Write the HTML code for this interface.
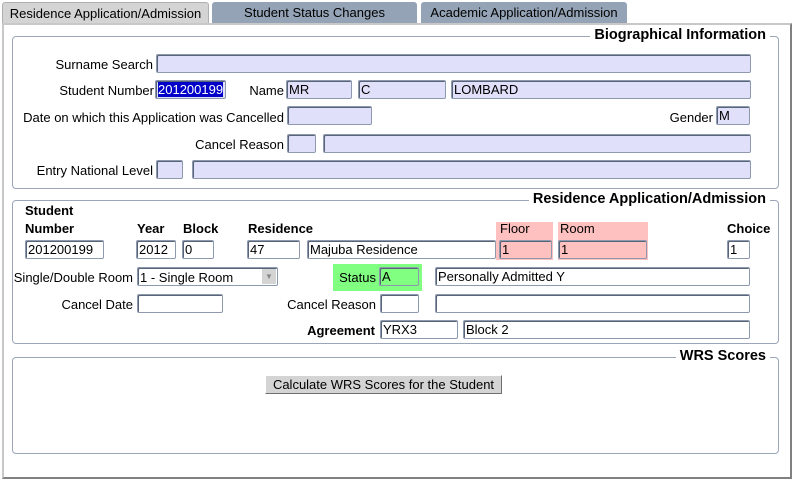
<!DOCTYPE html>
<html><head><style>
*{margin:0;padding:0;box-sizing:border-box}
body{width:795px;height:482px;background:#fff;position:relative;overflow:hidden;font-family:"Liberation Sans",sans-serif;font-size:13px;color:#000}
.a{position:absolute;white-space:nowrap}
.tab{position:absolute;top:2px;height:21px;border-radius:3px 3px 0 0;text-align:center;line-height:22px;font-size:13px}
.panel{position:absolute;left:2px;top:23px;width:790px;height:456px;border-left:2px solid #c8c8c8;border-top:2px solid #c8c8c8;border-right:2px solid #808080;border-bottom:2px solid #808080}
.grp{position:absolute;border:1px solid #9aa6b8;border-radius:4px}
.gt{position:absolute;background:#fff;font-weight:bold;font-size:14.5px;padding:0 4px;line-height:15px}
.i{position:absolute;height:19px;border:1px solid #8d99ad;border-radius:2px;box-shadow:inset 1px 1px 0 #5a6478;background:#fff;padding-left:2px;line-height:17px;font-size:13px;overflow:hidden}
.l{background:#e0e0fa}
.lb{position:absolute;white-space:nowrap;line-height:15px}
.b{font-weight:bold}
</style></head><body>
<div class="tab" style="left:2px;width:207px;background:#d4d4d4;border:1px solid #b0b0b0;border-bottom:none">Residence Application/Admission</div>
<div class="tab" style="left:212px;width:205px;background:#94a3b5">Student Status Changes</div>
<div class="tab" style="left:421px;width:206px;background:#94a3b5">Academic Application/Admission</div>
<div class="panel"></div>

<div class="grp" style="left:12px;top:36px;width:767px;height:153px"></div>
<div class="gt" style="right:25px;top:28px">Biographical Information</div>
<div class="lb" style="right:642px;top:57px">Surname Search</div>
<div class="i l" style="left:156px;top:54px;width:595px"></div>
<div class="lb" style="right:641px;top:83px">Student Number</div>
<div class="i l" style="left:155px;top:80px;width:71px"><span style="background:#0000c8;color:#fff">201200199</span></div>
<div class="lb" style="right:511px;top:83px">Name</div>
<div class="i l" style="left:286px;top:80px;width:66px">MR</div>
<div class="i l" style="left:358px;top:80px;width:88px">C</div>
<div class="i l" style="left:451px;top:80px;width:300px">LOMBARD</div>
<div class="lb" style="right:511px;top:110px">Date on which this Application was Cancelled</div>
<div class="i l" style="left:287px;top:106px;width:85px"></div>
<div class="lb" style="right:82px;top:110px">Gender</div>
<div class="i l" style="left:716px;top:106px;width:34px">M</div>
<div class="lb" style="right:511px;top:137px">Cancel Reason</div>
<div class="i l" style="left:287px;top:134px;width:29px"></div>
<div class="i l" style="left:323px;top:134px;width:428px"></div>
<div class="lb" style="right:642px;top:163px">Entry National Level</div>
<div class="i l" style="left:156px;top:160px;width:27px"></div>
<div class="i l" style="left:192px;top:160px;width:559px"></div>

<div class="grp" style="left:12px;top:200px;width:767px;height:144px"></div>
<div class="gt" style="right:25px;top:192px">Residence Application/Admission</div>
<div class="lb b" style="left:25px;top:203px">Student</div>
<div class="lb b" style="left:25px;top:221px">Number</div>
<div class="lb b" style="left:137px;top:221px">Year</div>
<div class="lb b" style="left:183px;top:221px">Block</div>
<div class="lb b" style="left:248px;top:221px">Residence</div>
<div class="a" style="left:496px;top:222px;width:57px;height:38px;background:#ffc0c0"></div>
<div class="a" style="left:558px;top:222px;width:90px;height:38px;background:#ffc0c0"></div>
<div class="lb" style="left:500px;top:221px">Floor</div>
<div class="lb" style="left:560px;top:221px">Room</div>
<div class="lb b" style="left:727px;top:221px">Choice</div>
<div class="i" style="left:25px;top:240px;width:79px">201200199</div>
<div class="i" style="left:136px;top:240px;width:40px">2012</div>
<div class="i" style="left:182px;top:240px;width:32px">0</div>
<div class="i" style="left:247px;top:240px;width:53px">47</div>
<div class="i" style="left:307px;top:240px;width:189px">Majuba Residence</div>
<div class="i" style="left:499px;top:240px;width:53px;background:#ffc0c0">1</div>
<div class="i" style="left:558px;top:240px;width:89px;background:#ffc0c0">1</div>
<div class="i" style="left:727px;top:240px;width:23px">1</div>
<div class="lb" style="right:662px;top:270px">Single/Double Room</div>
<div class="i" style="left:137px;top:267px;width:141px;height:19px;line-height:20px">1 - Single Room
<div class="a" style="right:1px;top:1px;width:14px;height:15px;background:#d4d4d4;font-size:8px;color:#888;text-align:center;line-height:15px">▼</div></div>
<div class="a" style="left:333px;top:264px;width:89px;height:27px;background:#80ff80"></div>
<div class="lb" style="right:419px;top:270px">Status</div>
<div class="i" style="left:379px;top:267px;width:40px;background:#80ff80">A</div>
<div class="i" style="left:435px;top:267px;width:315px">Personally Admitted Y</div>
<div class="lb" style="right:662px;top:297px">Cancel Date</div>
<div class="i" style="left:137px;top:294px;width:86px"></div>
<div class="lb" style="right:419px;top:297px">Cancel Reason</div>
<div class="i" style="left:380px;top:294px;width:39px"></div>
<div class="i" style="left:435px;top:294px;width:315px"></div>
<div class="lb b" style="right:420px;top:323px">Agreement</div>
<div class="i" style="left:380px;top:320px;width:78px">YRX3</div>
<div class="i" style="left:463px;top:320px;width:287px">Block 2</div>

<div class="grp" style="left:12px;top:357px;width:767px;height:97px"></div>
<div class="gt" style="right:25px;top:349px">WRS Scores</div>
<div class="a" style="left:265px;top:375px;width:237px;height:19px;background:#d4d4d4;border:1px solid #fff;border-right-color:#707070;border-bottom-color:#707070;text-align:center;line-height:17px;font-size:13px">Calculate WRS Scores for the Student</div>
</body></html>
